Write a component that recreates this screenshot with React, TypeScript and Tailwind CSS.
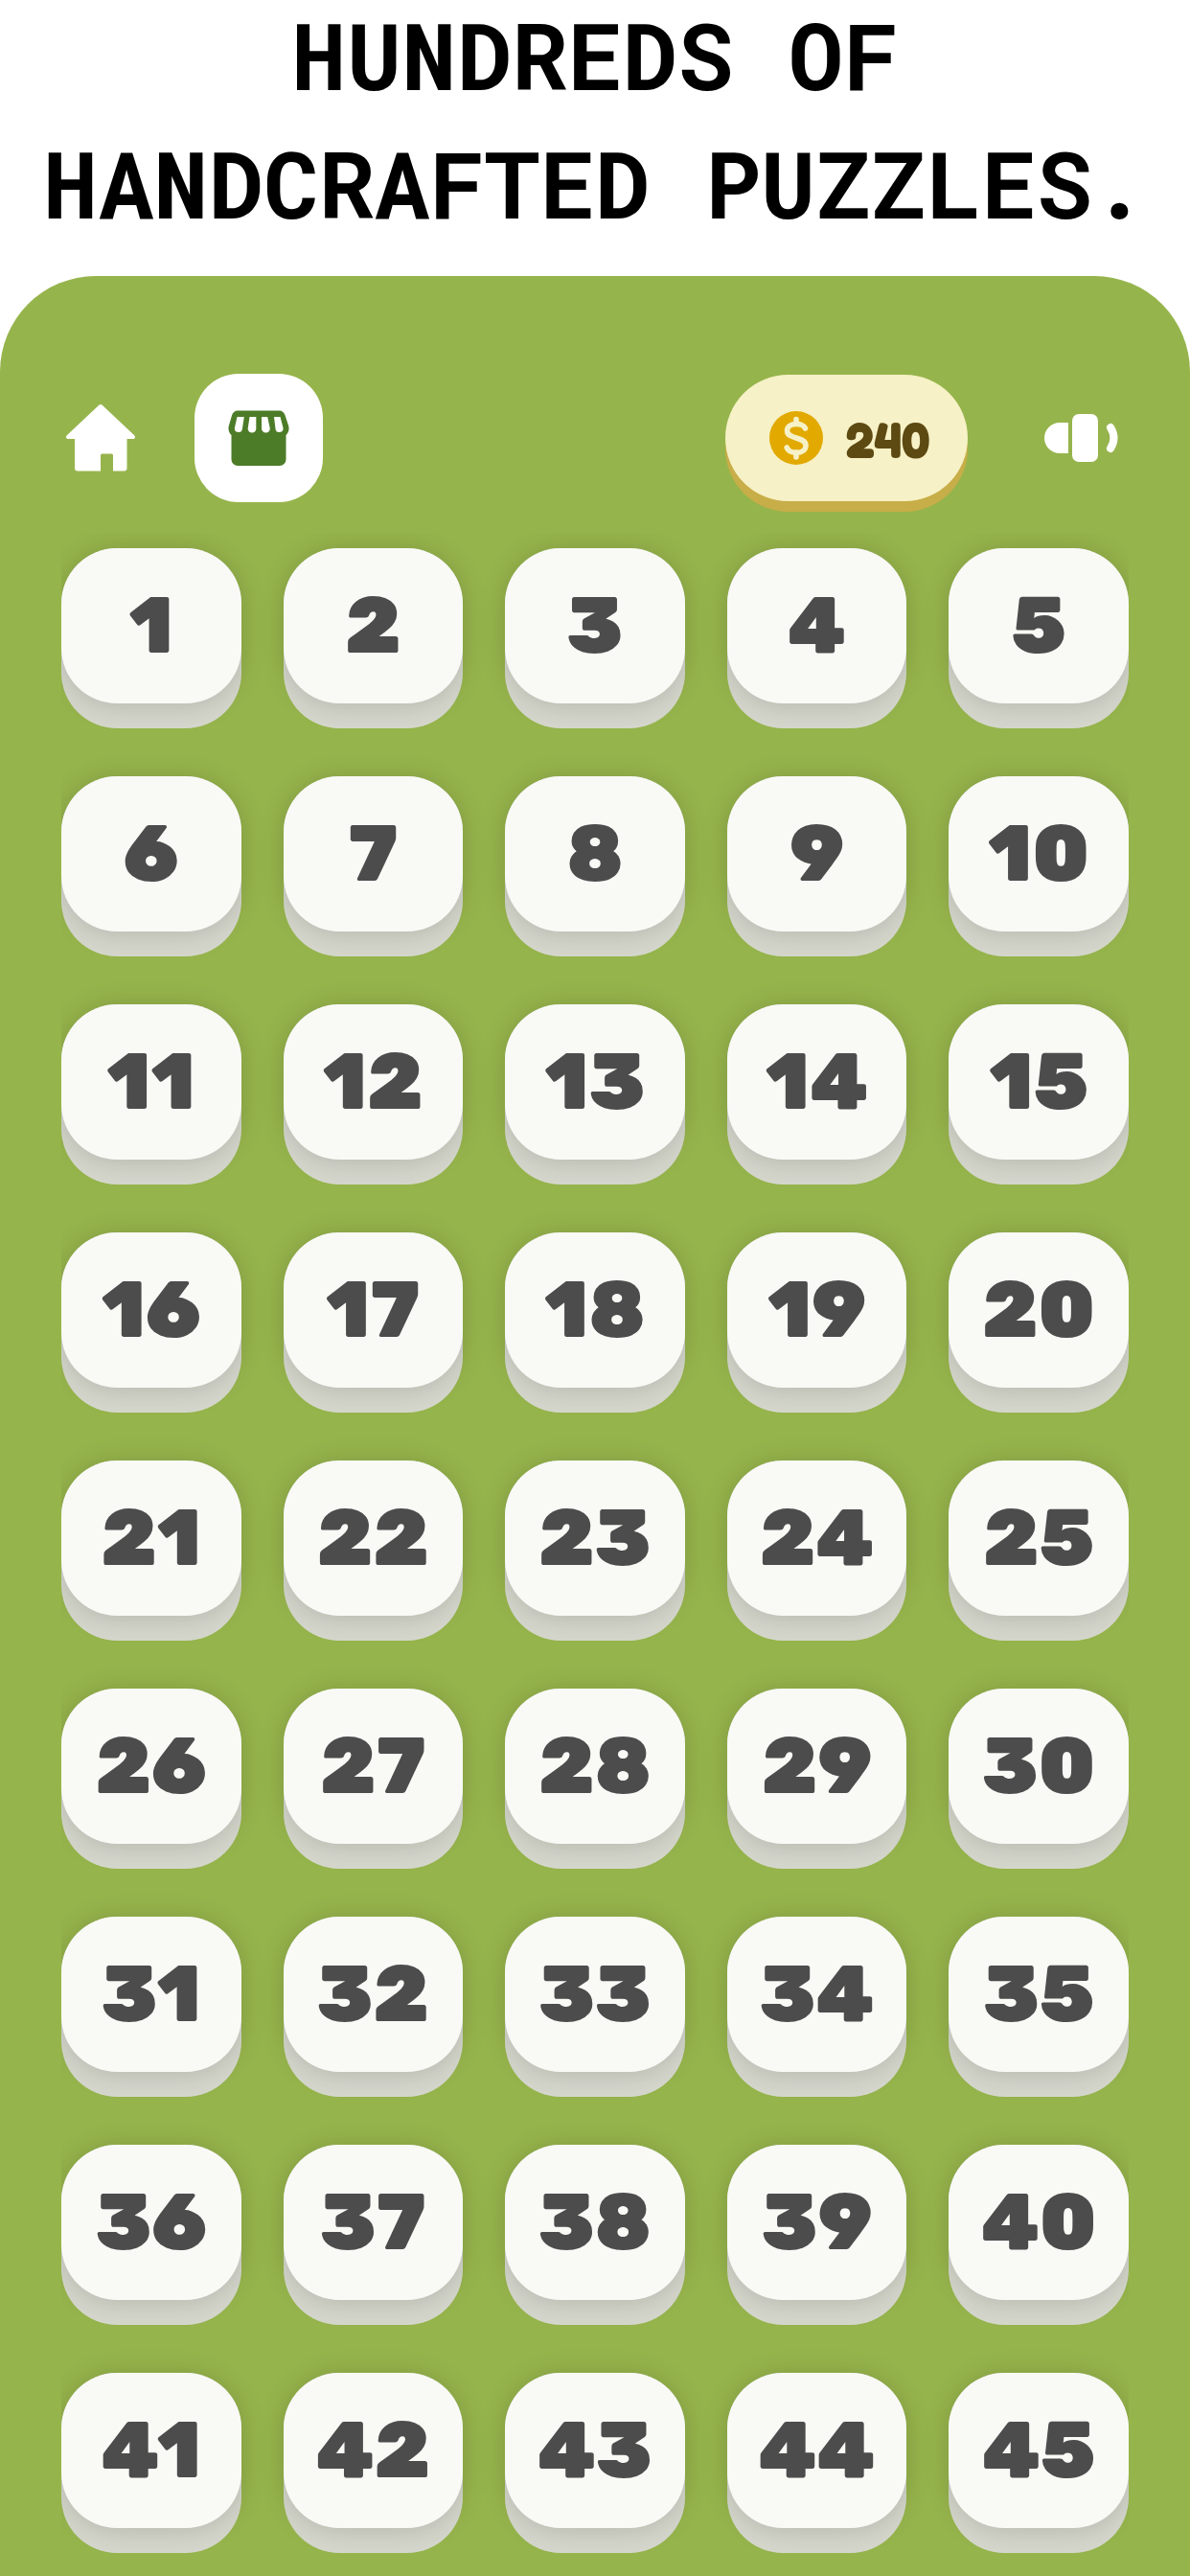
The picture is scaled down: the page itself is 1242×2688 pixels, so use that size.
const levels = Array.from({ length: 45 }, (_, i) => i + 1)

function HomeIcon() {
  return (
    <svg viewBox="0 0 72 70" className="h-[70px] w-[72px]" fill="currentColor" aria-hidden="true">
      <path d="M34 1a3 3 0 0 1 4 0L71.200 32.200c1.600 1.600.8 3.800-1.400 3.800H63.500V66.500a3 3 0 0 1-3 3H49V53a1.500 1.500 0 0 0-1.500-1.500H37.500A1.500 1.500 0 0 0 36 53V69.500H12a3 3 0 0 1-3-3V36H2.200C0 36-.8 33.800.8 32.200Z" />
    </svg>
  )
}

function StoreIcon() {
  return (
    <svg viewBox="0 0 64 58" className="h-[58px] w-16" aria-hidden="true">
      <path
        fill="#4d7c28"
        d="M10 .5H53.500C56.500.5 58.800 2.500 59.600 5.500L63.200 16.500C64 20 63.400 23 60.500 26V51.500a6.500 6.500 0 0 1-6.500 6.500H10a6.500 6.500 0 0 1-6.500-6.500V26C.6 23 0 20 .8 16.500L4 5.500C4.800 2.500 7 .5 10 .5Z"
      />
      <g fill="#fff">
        <path d="M9.500 7H16.800L14.900 19.500a4 4 0 0 1-8-1Z" />
        <path d="M22.500 7h6.800V19.300a4.300 4.300 0 0 1-8.600 0Z" />
        <path d="M35 7h6.200L43.800 19a4.400 4.400 0 0 1-8.800.3Z" />
        <path d="M48 7h6.500L57.500 18.500a4 4 0 0 1-8 1Z" />
      </g>
    </svg>
  )
}

function CoinIcon() {
  return (
    <svg viewBox="0 0 56 56" className="size-14" fill="none" aria-hidden="true">
      <circle cx="28" cy="28" r="28" fill="#e2a900" />
      <g stroke="#f6f1c6" strokeWidth="5.600" strokeLinecap="round">
        <path d="M28 8.500v5M28 43v5" />
        <path d="M37.500 18C34.500 11.500 18.500 11.500 18.500 20.500C18.500 30 38 26 38 36C38 45.500 21 45.500 18.200 38" />
      </g>
    </svg>
  )
}

function SoundIcon() {
  return (
    <svg viewBox="0 0 78 50" className="h-[50px] w-[78px]" fill="currentColor" aria-hidden="true">
      <path d="M16 9h9V41H16A16 16 0 0 1 16 9Z" />
      <rect x="29" y="0" width="27" height="50" rx="7" />
      <path d="M69 14q7 11 0 22" fill="none" stroke="currentColor" strokeWidth="8" strokeLinecap="round" />
    </svg>
  )
}

function LevelButton({ level }: { level: number }) {
  return (
    <button type="button" className="rounded-[58px] bg-[#d5d7cc] pb-[26px]">
      <span className="flex h-[162px] items-center justify-center rounded-[58px] bg-[#f9faf6] text-[83px] font-black text-[#4c4c4c] shadow-[0_2px_28px_rgba(0,0,0,0.16)]">
        {level}
      </span>
    </button>
  )
}

export default function App() {
  return (
    <div className="flex min-h-screen flex-col bg-white">
      <h1 className="flex h-[288px] flex-col gap-5 text-center font-['Roboto_Mono','DejaVu_Sans_Mono',monospace] text-[96px] leading-[114px] font-bold text-black">
        <span>HUNDREDS OF</span>
        <span>HANDCRAFTED PUZZLES.</span>
      </h1>

      <main className="flex-1 rounded-t-[100px] bg-[#96b44c] px-16 pt-[102px] pb-[22px] font-['Rubik','Inter',sans-serif]">
        <header className="flex items-center justify-between">
          <div className="flex items-center gap-[62px] pl-[5px]">
            <button type="button" aria-label="Home" className="text-white">
              <HomeIcon />
            </button>
            <button
              type="button"
              aria-label="Store"
              className="flex size-[134px] items-center justify-center rounded-[46px] bg-white"
            >
              <StoreIcon />
            </button>
          </div>

          <div className="flex items-center gap-20 pr-2.5">
            <button
              type="button"
              className="flex h-[132px] w-[253px] items-center gap-6 rounded-[66px] bg-[#f6f1c6] pl-[46px] font-['Fredoka','Open_Sans',sans-serif] text-[52px] font-bold text-[#5d4912] shadow-[0_11px_0_#c8ae48]"
            >
              <CoinIcon />
              <span className="pt-1">240</span>
            </button>
            <button type="button" aria-label="Sound" className="text-white">
              <SoundIcon />
            </button>
          </div>
        </header>

        <div className="mt-8 grid grid-cols-5 gap-x-11 gap-y-[50px] overflow-hidden pt-4">
          {levels.map((level) => (
            <LevelButton key={level} level={level} />
          ))}
        </div>
      </main>
    </div>
  )
}
